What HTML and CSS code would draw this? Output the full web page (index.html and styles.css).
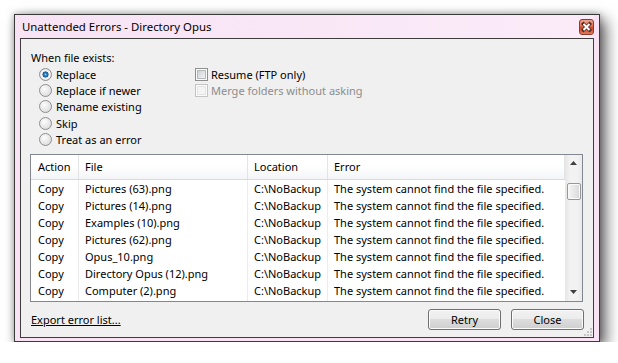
FILE: index.html
```html
<!DOCTYPE html>
<html>
<head>
    <title>Unattended Errors - Directory Opus</title>
    <link rel="stylesheet" href="styles.css">
</head>
<body>
    <div class="desktop">
        <div class="window">
            <div class="titlebar">
                <span class="title">Unattended Errors - Directory Opus</span>
                <span class="close-btn">
                    <svg width="13" height="14" viewBox="0 0 13 14">
                        <path d="M3.5 4 L9.5 10 M9.5 4 L3.5 10" stroke="#5a2a22" stroke-width="3.6" stroke-linecap="square"/>
                        <path d="M3.5 4 L9.5 10 M9.5 4 L3.5 10" stroke="#fff" stroke-width="2"/>
                    </svg>
                </span>
            </div>

            <div class="client">
                <div class="group-label">When file exists:</div>

                <div class="options">
                    <div class="radios">
                        <div class="opt"><span class="radio checked"></span>Replace</div>
                        <div class="opt"><span class="radio"></span>Replace if newer</div>
                        <div class="opt"><span class="radio"></span>Rename existing</div>
                        <div class="opt"><span class="radio"></span>Skip</div>
                        <div class="opt"><span class="radio"></span>Treat as an error</div>
                    </div>
                    <div class="checks">
                        <div class="opt"><span class="check"></span>Resume (FTP only)</div>
                        <div class="opt disabled"><span class="check"></span>Merge folders without asking</div>
                    </div>
                </div>

                <div class="list">
                    <div class="grid">
                        <div class="row head">
                            <div>Action</div><div>File</div><div>Location</div><div>Error</div>
                        </div>
                        <div class="row"><div>Copy</div><div>Pictures (63).png</div><div>C:\NoBackup</div><div>The system cannot find the file specified.</div></div>
                        <div class="row"><div>Copy</div><div>Pictures (14).png</div><div>C:\NoBackup</div><div>The system cannot find the file specified.</div></div>
                        <div class="row"><div>Copy</div><div>Examples (10).png</div><div>C:\NoBackup</div><div>The system cannot find the file specified.</div></div>
                        <div class="row"><div>Copy</div><div>Pictures (62).png</div><div>C:\NoBackup</div><div>The system cannot find the file specified.</div></div>
                        <div class="row"><div>Copy</div><div>Opus_10.png</div><div>C:\NoBackup</div><div>The system cannot find the file specified.</div></div>
                        <div class="row"><div>Copy</div><div>Directory Opus (12).png</div><div>C:\NoBackup</div><div>The system cannot find the file specified.</div></div>
                        <div class="row"><div>Copy</div><div>Computer (2).png</div><div>C:\NoBackup</div><div>The system cannot find the file specified.</div></div>
                        <div class="row filler"><div></div><div></div><div></div><div></div></div>
                    </div>
                    <div class="scrollbar">
                        <div class="arrow">
                            <svg width="7" height="4" viewBox="0 0 7 4"><polygon points="3.5,0 7,4 0,4" fill="#404040"/></svg>
                        </div>
                        <div class="thumb"></div>
                        <div class="track"></div>
                        <div class="arrow">
                            <svg width="7" height="4" viewBox="0 0 7 4"><polygon points="0,0 7,0 3.5,4" fill="#404040"/></svg>
                        </div>
                    </div>
                </div>

                <div class="footer">
                    <a class="export" href="#">Export error list...</a>
                    <div class="buttons">
                        <button>Retry</button>
                        <button>Close</button>
                    </div>
                </div>

                <svg class="grip" width="9" height="9" viewBox="0 0 9 9">
                    <rect x="7" y="1" width="2" height="2" fill="#c6c6c6"/>
                    <rect x="4" y="4" width="2" height="2" fill="#c6c6c6"/>
                    <rect x="7" y="4" width="2" height="2" fill="#c6c6c6"/>
                    <rect x="1" y="7" width="2" height="2" fill="#c6c6c6"/>
                    <rect x="4" y="7" width="2" height="2" fill="#c6c6c6"/>
                    <rect x="7" y="7" width="2" height="2" fill="#c6c6c6"/>
                </svg>
            </div>
        </div>
    </div>
</body>
</html>
```

FILE: styles.css
```css
body {
    margin: 0;
    background: #fff;
    font-family: "Noto Sans", sans-serif;
    font-size: 11px;
    color: #000;
}
.desktop {
    padding: 14px 0 0 14px;
}
.window {
    width: 586px;
    height: 328px;
    box-sizing: border-box;
    border: 1px solid #3a3a3a;
    padding: 0 5px 3px;
    background: #f7e3f4;
    box-shadow: 6px 6px 14px rgba(0, 0, 0, 0.6), 0 0 7px rgba(0, 0, 0, 0.3);
    display: flex;
    flex-direction: column;
}
.titlebar {
    height: 23px;
    flex: none;
    display: flex;
    justify-content: space-between;
    padding-left: 2px;
    background: linear-gradient(to right, #f7e3f4, #fbebf9);
}
.title {
    font-size: 11.4px;
    line-height: 23px;
}
.close-btn {
    width: 15px;
    height: 16px;
    margin-top: 4px;
    box-sizing: border-box;
    border: 1px solid #8b3b2c;
    border-radius: 3px;
    background: linear-gradient(#eda58e, #dd6d50 45%, #cc4529 55%, #e27c5c);
    display: flex;
    align-items: center;
    justify-content: center;
}
.client {
    position: relative;
    height: 300px;
    box-sizing: border-box;
    border: 1px solid #3d3d3d;
    background: #f0f0f0;
    padding: 0 9px;
}
.group-label {
    margin-top: 11px;
    padding-left: 1px;
    line-height: 16px;
}
.options {
    display: grid;
    grid-template-columns: 156px auto;
    padding-left: 9px;
}
.opt {
    height: 16.4px;
    display: flex;
    align-items: center;
    gap: 4px;
    white-space: nowrap;
}
.checks .opt {
    gap: 3px;
}
.opt.disabled {
    color: #8d8d8d;
}
.radio {
    width: 13px;
    height: 13px;
    box-sizing: border-box;
    border-radius: 50%;
    border: 1px solid #8f8f8f;
    background: radial-gradient(circle at 40% 35%, #fdfdfd, #e2e2e2 65%, #cdcdcd);
}
.radio.checked {
    background: radial-gradient(circle at 50% 50%, #8fd0f8 0, #2d82c4 1.3px, #1a5a8c 2.8px, #e6ebef 3.3px, #f7f7f7 4.3px, #d6d6d6 6px);
}
.check {
    width: 13px;
    height: 13px;
    box-sizing: border-box;
    border: 1px solid #8e8f8f;
    padding: 1px;
    background: #fbfbfb;
}
.check::after {
    content: "";
    display: block;
    width: 9px;
    height: 9px;
    box-sizing: border-box;
    border: 1px solid #b5b9be;
    background: linear-gradient(135deg, #cdd0d4, #f4f4f4);
}
.disabled .check {
    border-color: #c4c4c4;
}
.disabled .check::after {
    border-color: #e4e4e4;
    background: #f4f4f4;
}
.list {
    margin-top: 6px;
    width: 553px;
    height: 148px;
    box-sizing: border-box;
    border: 1px solid #828790;
    background: #fff;
    display: flex;
    overflow: hidden;
}
.grid {
    width: 534px;
    flex: none;
}
.row {
    display: grid;
    grid-template-columns: 47px 169px 80px 238px;
    height: 17px;
    line-height: 17px;
    white-space: nowrap;
}
.row > div {
    padding-left: 6px;
    border-left: 1px solid #ececec;
    overflow: hidden;
}
.row > div:first-child {
    padding-left: 7px;
    border-left: none;
}
.row.head {
    height: 24px;
    line-height: 24px;
    border-bottom: 1px solid #d8dadd;
    background: linear-gradient(#ffffff, #ffffff 45%, #f4f5f7);
}
.row.head > div {
    border-left-color: #e3e4e6;
}
.row.head > div:last-child {
    border-right: 1px solid #e3e4e6;
}
.scrollbar {
    width: 17px;
    flex: none;
    display: flex;
    flex-direction: column;
    background: linear-gradient(to right, #e6e6e6, #f2f2f2 30%, #f2f2f2 70%, #e9e9e9);
}
.arrow {
    height: 17px;
    flex: none;
    display: flex;
    align-items: center;
    justify-content: center;
}
.thumb {
    height: 17px;
    margin: 11px 1px 0 2px;
    box-sizing: border-box;
    border: 1px solid #979797;
    border-radius: 2px;
    background: linear-gradient(to right, #f5f5f5, #e6e6e6 55%, #d8d8d8);
    box-shadow: inset 0 0 0 1px #fafafa;
}
.track {
    flex: 1;
}
.footer {
    margin-top: 7px;
    display: flex;
    align-items: center;
    justify-content: space-between;
    padding-left: 1px;
}
.export {
    color: #000;
    text-decoration: underline;
}
.buttons {
    display: flex;
    gap: 10px;
}
button {
    width: 73px;
    height: 21px;
    box-sizing: border-box;
    border: 1px solid #707070;
    border-radius: 3px;
    background: linear-gradient(#f2f2f2, #ebebeb 50%, #dddddd 50%, #cfcfcf);
    box-shadow: inset 0 0 0 1px #fbfbfb;
    font-family: "Noto Sans", sans-serif;
    font-size: 11px;
    color: #000;
    padding: 0;
}
.grip {
    position: absolute;
    right: 1px;
    bottom: 1px;
}
```
